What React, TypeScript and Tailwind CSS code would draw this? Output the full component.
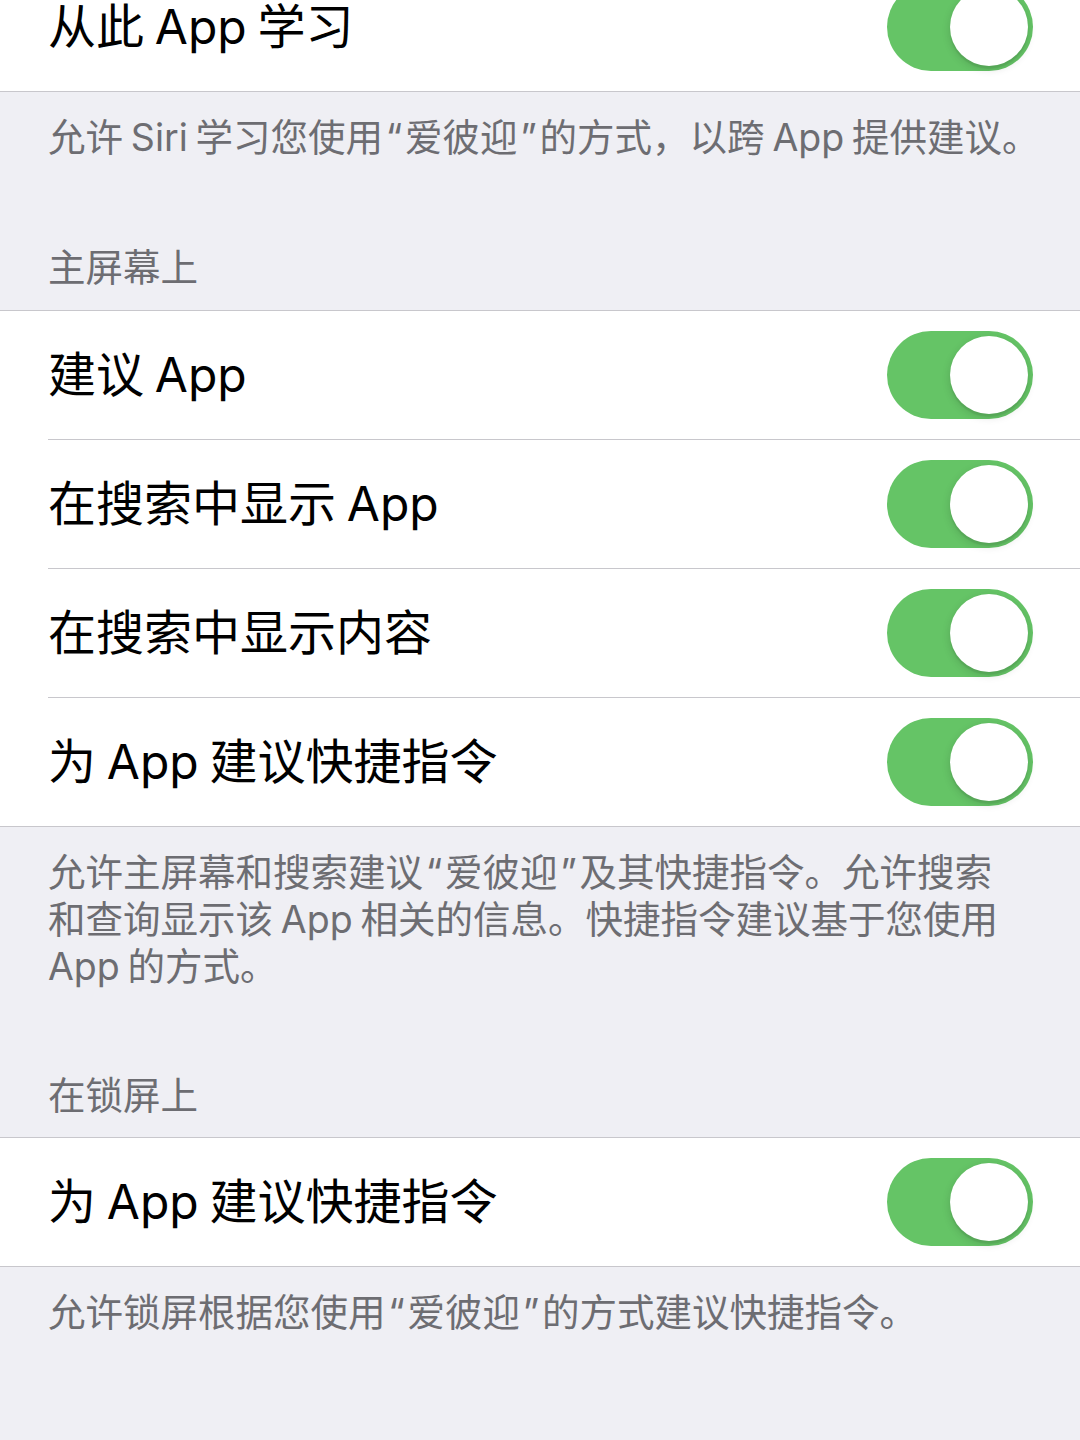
import React from "react";

const LQ = () => <span className="inline-block w-[22px] text-center">“</span>;
const RQ = () => <span className="inline-block w-[22px] text-center">”</span>;

function Toggle() {
  return (
    <div className="flex h-[88px] w-[146px] shrink-0 items-center justify-end rounded-full bg-[#65c466] p-[5px]">
      <div className="h-[78px] w-[78px] rounded-full bg-white shadow-[0_3px_8px_rgba(0,0,0,0.15),0_3px_1px_rgba(0,0,0,0.06)]" />
    </div>
  );
}

function Row({ title }: { title: string }) {
  return (
    <div className="flex h-[128px] items-center justify-between pl-[48px] pr-[47px]">
      <span className="text-[48px] leading-none text-black">{title}</span>
      <Toggle />
    </div>
  );
}

function Sep() {
  return <div className="ml-[48px] h-px bg-[#c8c7cc]" />;
}

export default function App() {
  return (
    <div className="min-h-[1440px] w-[1080px] overflow-hidden bg-[#efeff4] font-['Inter','Noto_Sans_CJK_SC',sans-serif] [word-spacing:-0.17em]">
      <div className="-mt-[37px] border-b border-[#c8c7cc] bg-white">
        <Row title="从此 App 学习" />
      </div>

      <div className="whitespace-nowrap px-[48px] pt-[22px] text-[37.5px] leading-[47px] text-[#6d6d72]">
        允许 Siri 学习您使用<LQ />爱彼迎<RQ />的方式，以跨 App 提供建议。
      </div>

      <div className="px-[48px] pb-[19px] pt-[83px] text-[37.5px] leading-[47px] text-[#6d6d72]">主屏幕上</div>

      <div className="border-y border-[#c8c7cc] bg-white">
        <Row title="建议 App" />
        <Sep />
        <Row title="在搜索中显示 App" />
        <Sep />
        <Row title="在搜索中显示内容" />
        <Sep />
        <Row title="为 App 建议快捷指令" />
      </div>

      <div className="whitespace-nowrap px-[48px] pt-[22px] text-[37.5px] leading-[47px] text-[#6d6d72]">
        允许主屏幕和搜索建议<LQ />爱彼迎<RQ />及其快捷指令。允许搜索
        <br />
        和查询显示该 App 相关的信息。快捷指令建议基于您使用
        <br />
        App 的方式。
      </div>

      <div className="px-[48px] pb-[18px] pt-[82px] text-[37.5px] leading-[47px] text-[#6d6d72]">在锁屏上</div>

      <div className="border-y border-[#c8c7cc] bg-white">
        <Row title="为 App 建议快捷指令" />
      </div>

      <div className="whitespace-nowrap px-[48px] pt-[22px] text-[37.5px] leading-[47px] text-[#6d6d72]">
        允许锁屏根据您使用<LQ />爱彼迎<RQ />的方式建议快捷指令。
      </div>
    </div>
  );
}
